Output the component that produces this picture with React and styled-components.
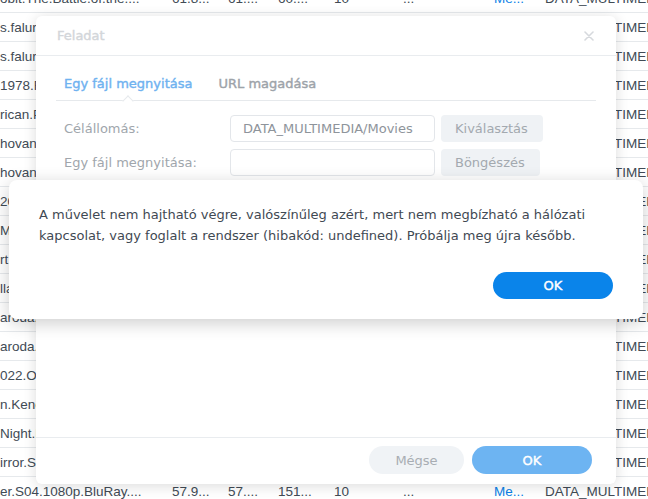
import React from 'react'
import styled, { createGlobalStyle } from 'styled-components'

const rows = [
    ['obit.The.Battle.of.the....', '61.8...', '61....', '60....', '10', '...', 'Me...', 'DATA_MULTIMEDIA'],
    ['s.falura.Budapest.1080p....', '4.37...', '4.3...', '12....', '10', '...', 'Me...', 'DATA_MULTIMEDIA'],
    ['s.falura.Budapest.720p....', '2.19...', '2.1...', '9.8...', '10', '...', 'Me...', 'DATA_MULTIMEDIA'],
    ['1978.Remastered.BluRay....', '8.02...', '8.0...', '33....', '10', '...', 'Me...', 'DATA_MULTIMEDIA'],
    ['rican.Psycho.2000.1080p....', '9.41...', '9.4...', '41....', '10', '...', 'Me...', 'DATA_MULTIMEDIA'],
    ['hovanszky.S01.1080p....', '12.6...', '12....', '52....', '10', '...', 'Me...', 'DATA_MULTIMEDIA'],
    ['hovanszky.S02.1080p....', '13.1...', '13....', '55....', '10', '...', 'Me...', 'DATA_MULTIMEDIA'],
    ['2021.Dune.1080p.WEB....', '7.44...', '7.4...', '30....', '10', '...', 'Me...', 'DATA_MULTIMEDIA'],
    ['Mank.2020.1080p.NF....', '5.12...', '5.1...', '21....', '10', '...', 'Me...', 'DATA_MULTIMEDIA'],
    ['rt.Of.War.1080p.BluRay....', '6.80...', '6.8...', '28....', '10', '...', 'Me...', 'DATA_MULTIMEDIA'],
    ['llam.Ritka.2019.1080p....', '3.96...', '3.9...', '16....', '10', '...', 'Me...', 'DATA_MULTIMEDIA'],
    ['aroda.S01.1080p.WEB....', '21.4...', '21....', '88....', '10', '...', 'Me...', 'DATA_MULTIMEDIA'],
    ['aroda.S02.1080p.WEB....', '22.9...', '22....', '94....', '10', '...', 'Me...', 'DATA_MULTIMEDIA'],
    ['022.Operation.Fortune....', '6.15...', '6.1...', '25....', '10', '...', 'Me...', 'DATA_MULTIMEDIA'],
    ['n.Kenobi.S01.1080p....', '14.2...', '14....', '59....', '10', '...', 'Me...', 'DATA_MULTIMEDIA'],
    ['Night.Manager.S01....', '18.7...', '18....', '77....', '10', '...', 'Me...', 'DATA_MULTIMEDIA'],
    ['irror.S05.1080p.NF....', '10.3...', '10....', '43....', '10', '...', 'Me...', 'DATA_MULTIMEDIA'],
    ['er.S04.1080p.BluRay....', '57.9...', '57....', '151...', '10', '...', 'Me...', 'DATA_MULTIMEDIA'],
]

const CloseIcon = () => (
    <svg width="10" height="10" viewBox="0 0 10 10">
        <path d="M1 1 L9 9 M9 1 L1 9" stroke="#d6d9dd" strokeWidth="1.6" strokeLinecap="round" />
    </svg>
)

const App = () => {
    return (
        <Screen>
            <GlobalStyle />
            <Table>
                {rows.map((r, i) => (
                    <Row key={i}>
                        {r.map((c, j) => (
                            <Cell key={j} $link={j === 6}>{c}</Cell>
                        ))}
                    </Row>
                ))}
            </Table>

            <Window>
                <WinHeader>
                    <WinTitle>Feladat</WinTitle>
                    <CloseIcon />
                </WinHeader>
                <WinBody>
                    <Tabs>
                        <Tab $active>Egy fájl megnyitása</Tab>
                        <Tab>URL magadása</Tab>
                    </Tabs>
                    <Form>
                        <Label>Célállomás:</Label>
                        <Field>DATA_MULTIMEDIA/Movies</Field>
                        <SideButton>Kiválasztás</SideButton>
                        <Label>Egy fájl megnyitása:</Label>
                        <Field />
                        <SideButton>Böngészés</SideButton>
                    </Form>
                </WinBody>
                <WinFooter>
                    <PillButton $width={95}>Mégse</PillButton>
                    <PillButton $width={120} $primary>OK</PillButton>
                </WinFooter>
            </Window>

            <Alert>
                <AlertText>
                    A művelet nem hajtható végre, valószínűleg azért, mert nem megbízható a hálózati
                    kapcsolat, vagy foglalt a rendszer (hibakód: undefined). Próbálja meg újra később.
                </AlertText>
                <AlertFooter>
                    <AlertButton>OK</AlertButton>
                </AlertFooter>
            </Alert>
        </Screen>
    )
}

const GlobalStyle = createGlobalStyle`
    html, body {
        margin: 0;
        padding: 0;
        background: #ffffff;
    }
    body {
        font-family: 'DejaVu Sans', Verdana, sans-serif;
        overflow: hidden;
    }
    * {
        box-sizing: border-box;
    }
`;

const Screen = styled.div`
    position: relative;
    width: 648px;
    height: 499px;
    overflow: hidden;
    background: #ffffff;
`;

const Table = styled.div`
    margin-top: -16px;
`;

const Row = styled.div`
    display: grid;
    grid-template-columns: 172px 56px 50px 56px 69px 91px 51px 1fr;
    align-items: center;
    height: 29px;
    border-bottom: 1px solid #e6e9ec;
    font-family: 'Liberation Sans', Arial, sans-serif;
    font-size: 13.5px;
    color: #414b55;
    white-space: nowrap;
`;

const Cell = styled.div`
    overflow: hidden;
    color: ${p => p.$link ? '#0a7fe6' : 'inherit'};
`;

const Window = styled.div`
    position: absolute;
    left: 36px;
    top: 16px;
    width: 580px;
    height: 468px;
    background: #ffffff;
    border-radius: 6px;
    box-shadow: 0 2px 14px rgba(0, 0, 0, 0.14);
    display: flex;
    flex-direction: column;
`;

const WinHeader = styled.div`
    height: 40px;
    display: flex;
    align-items: center;
    justify-content: space-between;
    padding: 0 22px 0 21px;
    border-bottom: 1px solid #e9ecef;
`;

const WinTitle = styled.div`
    font-size: 13px;
    color: #d3d6da;
    -webkit-text-stroke: 0.4px currentColor;
`;

const WinBody = styled.div`
    flex: 1;
    padding: 13px 20px 0;
`;

const Tabs = styled.div`
    display: flex;
    gap: 10px;
    height: 32px;
    padding-bottom: 2px;
    border-bottom: 1px solid #e6e9ec;
`;

const Tab = styled.div`
    position: relative;
    display: flex;
    align-items: center;
    padding: 0 8px;
    font-size: 13px;
    -webkit-text-stroke: 0.4px currentColor;
    color: ${p => p.$active ? '#6fb2f0' : '#9da3a9'};
    &::after {
        content: '';
        display: ${p => p.$active ? 'block' : 'none'};
        position: absolute;
        left: 50%;
        bottom: -3px;
        width: 7px;
        height: 7px;
        background: #ffffff;
        border-top: 1px solid #e6e9ec;
        border-left: 1px solid #e6e9ec;
        transform: translate(-50%, 50%) rotate(45deg);
    }
`;

const Form = styled.div`
    display: grid;
    grid-template-columns: 168px 205px auto;
    justify-content: start;
    column-gap: 6px;
    row-gap: 7px;
    margin-top: 14px;
`;

const Label = styled.div`
    display: flex;
    align-items: center;
    padding-left: 8px;
    font-size: 13px;
    color: #a0a6ac;
    white-space: nowrap;
`;

const Field = styled.div`
    height: 27px;
    display: flex;
    align-items: center;
    padding: 0 12px;
    border: 1px solid #e3e6ea;
    border-radius: 4px;
    font-size: 13px;
    color: #8e949b;
    white-space: nowrap;
    overflow: hidden;
`;

const SideButton = styled.div`
    justify-self: start;
    height: 27px;
    display: flex;
    align-items: center;
    padding: 0 15px 0 14px;
    background: #eff2f5;
    border-radius: 4px;
    font-size: 13px;
    color: #a3a9af;
`;

const WinFooter = styled.div`
    display: flex;
    justify-content: flex-end;
    gap: 8px;
    padding: 8px 24px 10px;
    border-top: 1px solid #e9ecef;
`;

const PillButton = styled.div`
    width: ${p => p.$width}px;
    height: 28px;
    display: flex;
    align-items: center;
    justify-content: center;
    border-radius: 14px;
    font-size: 13px;
    -webkit-text-stroke: ${p => p.$primary ? '0.4px currentColor' : '0'};
    background: ${p => p.$primary ? '#6db4f2' : '#f0f3f6'};
    color: ${p => p.$primary ? '#ffffff' : '#a8adb3'};
`;

const Alert = styled.div`
    position: absolute;
    left: 9px;
    top: 180px;
    width: 634px;
    height: 139px;
    display: flex;
    flex-direction: column;
    padding: 24px 30px 20px;
    background: #ffffff;
    border-radius: 8px;
    box-shadow: 0 4px 18px rgba(0, 0, 0, 0.2);
`;

const AlertText = styled.p`
    margin: 0;
    font-size: 13px;
    line-height: 21px;
    color: #3f4953;
`;

const AlertFooter = styled.div`
    margin-top: auto;
    display: flex;
    justify-content: flex-end;
`;

const AlertButton = styled.div`
    width: 120px;
    height: 27px;
    display: flex;
    align-items: center;
    justify-content: center;
    border-radius: 14px;
    background: #0a84ea;
    color: #ffffff;
    font-size: 13px;
    -webkit-text-stroke: 0.4px currentColor;
`;

export default App
